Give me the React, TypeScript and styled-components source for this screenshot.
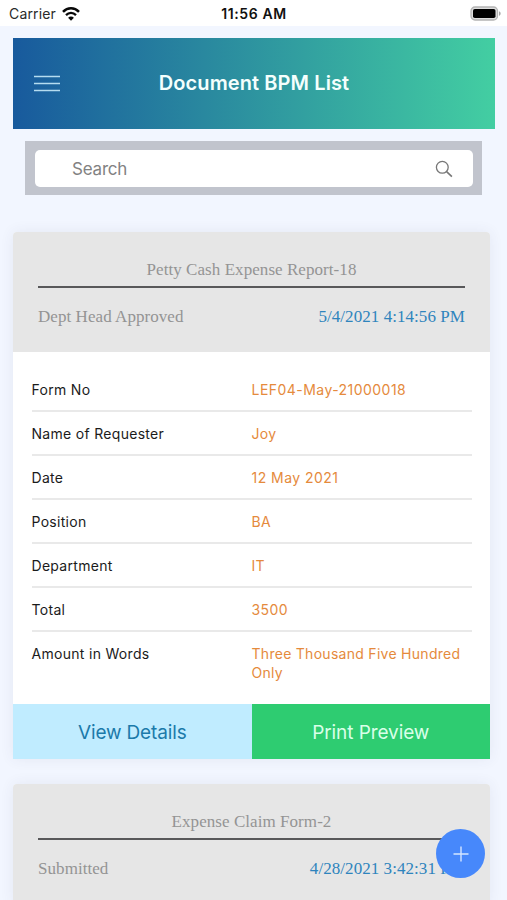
import React from "react";
import styled, { createGlobalStyle } from "styled-components";

const Global = createGlobalStyle`
  * { box-sizing: border-box; }
  html, body { margin: 0; height: 100%; overflow: hidden; background: #f2f6ff; }
  body { font-family: Inter, "Liberation Sans", sans-serif; }
`;

const Screen = styled.div`
  width: 507px;
  height: 900px;
  overflow: hidden;
  display: flex;
  flex-direction: column;
  background: #f2f6ff;
`;

const StatusBar = styled.div`
  flex: none;
  height: 25.5px;
  padding: 0 6px 0 9px;
  display: grid;
  grid-template-columns: 1fr auto 1fr;
  align-items: center;
  background: #fff;
  color: #111;
  font-size: 14px;
  line-height: 27px;
`;

const Carrier = styled.div`
  display: flex;
  align-items: center;
  gap: 6px;
  letter-spacing: 0.15px;
  color: #2a2a2a;
`;

const Clock = styled.div`
  margin-right: 2px;
  font-weight: 600;
  font-size: 14px;
  letter-spacing: 0.6px;
`;

const BatterySlot = styled.div`
  display: flex;
  justify-content: flex-end;
`;

const Header = styled.header`
  flex: none;
  width: 482px;
  height: 91px;
  margin: 12.5px 0 0 13px;
  padding: 0 21px;
  display: grid;
  grid-template-columns: 26px 1fr 26px;
  align-items: center;
  background: linear-gradient(90deg, #185a9d 0%, #43cea2 100%);
`;

const Title = styled.h1`
  margin: 0;
  padding-bottom: 2px;
  text-align: center;
  color: #f4fffd;
  font-size: 20px;
  font-weight: 600;
  line-height: 24px;
  letter-spacing: 0.1px;
`;

const SearchBar = styled.div`
  flex: none;
  width: 457px;
  height: 54px;
  margin: 12px 0 0 25px;
  padding: 8.5px 9.5px;
  background: #c1c4cd;
`;

const SearchField = styled.div`
  height: 37px;
  padding: 1px 20px 0 37.5px;
  display: flex;
  align-items: center;
  justify-content: space-between;
  border-radius: 5px;
  background: #fff;
  color: #828282;
  font-size: 17px;
  letter-spacing: -0.2px;
`;

const Cards = styled.main`
  flex: none;
  width: 477px;
  margin: 37px 0 0 13px;
  display: flex;
  flex-direction: column;
  gap: 25px;
`;

const Card = styled.section`
  border-radius: 4px 4px 0 0;
  background: #fff;
  box-shadow: 0 0 14px rgba(60, 70, 100, 0.08);
`;

const CardHead = styled.div`
  height: 120px;
  padding: 25px 25px 0;
  border-radius: 4px 4px 0 0;
  background: #e6e6e6;
  color: #949494;
  font-family: "Liberation Serif", serif;
  font-size: 17px;
  line-height: 25px;
  letter-spacing: 0.06px;
`;

const CardTitle = styled.div`
  height: 31px;
  text-align: center;
  border-bottom: 2px solid #58585a;
`;

const CardMeta = styled.div`
  margin-top: 16px;
  display: flex;
  justify-content: space-between;
`;

const Stamp = styled.span`
  color: #2e84bd;
`;

const Fields = styled.dl`
  margin: 0;
  height: 352px;
  padding: 16px 18px 0 18.5px;
  font-size: 14px;
  line-height: 18.5px;
`;

const Field = styled.div<{ $last?: boolean }>`
  height: 44px;
  padding-top: 13px;
  display: grid;
  grid-template-columns: 220px 1fr;
  border-bottom: ${(p) => (p.$last ? "none" : "2px solid #e9e9e9")};
`;

const Label = styled.dt`
  color: #1b1b1b;
  letter-spacing: 0.3px;
`;

const Value = styled.dd<{ $numeric?: boolean }>`
  margin: 0;
  color: #e58a3c;
  letter-spacing: ${(p) => (p.$numeric ? "0.46px" : "0.28px")};
`;

const Actions = styled.div`
  display: grid;
  grid-template-columns: 238.5px 238.5px;
  height: 54.5px;
`;

const Action = styled.button<{ $primary?: boolean }>`
  border: 0;
  padding: 3px 0 0;
  font: 400 19px/24px Inter, sans-serif;
  letter-spacing: ${(p) => (p.$primary ? "-0.08px" : "-0.15px")};
  background: ${(p) => (p.$primary ? "#2ecc71" : "#c0ecff")};
  color: ${(p) => (p.$primary ? "#d9ffe8" : "#1b7aaa")};
`;

const AddButton = styled.button`
  position: fixed;
  left: 436px;
  top: 829px;
  width: 49px;
  height: 49px;
  padding: 0;
  border: 0;
  border-radius: 50%;
  display: grid;
  place-items: center;
  background: #4788fb;
`;

const WifiIcon = () => (
  <svg width="18" height="14" viewBox="0 0 18 14" fill="none" stroke="#080808" strokeWidth="2.5">
    <path d="M1 4.8C5.5.2 12.5.2 17 4.8" />
    <path d="M4 8.1c2.9-2.9 7.1-2.9 10 0" strokeWidth="2.3" />
    <path d="M9 13.7 6.1 10.8c1.6-1.6 4.2-1.6 5.8 0z" fill="#080808" stroke="none" />
  </svg>
);

const BatteryIcon = () => (
  <svg width="31" height="15" viewBox="0 0 31 15">
    <rect x="1" y="1" width="26.5" height="13" rx="4" fill="#dedede" stroke="#b4b4b4" strokeWidth="1.3" />
    <rect x="3" y="3" width="22.5" height="9" rx="1.8" fill="#000" />
    <path d="M29 5.2c2.2.8 2.2 3.8 0 4.6z" fill="#a6a6a6" />
  </svg>
);

const MenuIcon = () => (
  <svg width="26" height="18" viewBox="0 0 26 18" stroke="#b5dcf0" strokeWidth="1.7">
    <path d="M0 1.5h26M0 8.5h26M0 15.5h26" />
  </svg>
);

const SearchIcon = () => (
  <svg width="18" height="18" viewBox="0 0 18 18" fill="none" stroke="#777" strokeWidth="1.3">
    <circle cx="7.3" cy="7.3" r="5.9" />
    <path d="m11.6 11.6 5.3 5" strokeWidth="1.6" />
  </svg>
);

const PlusIcon = () => (
  <svg width="16" height="16" viewBox="0 0 16 16" stroke="#d5e6ff" strokeWidth="1.4">
    <path d="M8 .5v15M.5 8h15" />
  </svg>
);

const fields = [
  ["Form No", "LEF04-May-21000018"],
  ["Name of Requester", "Joy"],
  ["Date", "12 May 2021"],
  ["Position", "BA"],
  ["Department", "IT"],
  ["Total", "3500"],
  ["Amount in Words", "Three Thousand Five Hundred Only"],
];

type HeadProps = { title: string; status: string; stamp: string };

const ReportHead = ({ title, status, stamp }: HeadProps) => (
  <CardHead>
    <CardTitle>{title}</CardTitle>
    <CardMeta>
      <span>{status}</span>
      <Stamp>{stamp}</Stamp>
    </CardMeta>
  </CardHead>
);

export default function App() {
  return (
    <Screen>
      <Global />
      <StatusBar>
        <Carrier>
          Carrier <WifiIcon />
        </Carrier>
        <Clock>11:56 AM</Clock>
        <BatterySlot>
          <BatteryIcon />
        </BatterySlot>
      </StatusBar>
      <Header>
        <MenuIcon />
        <Title>Document BPM List</Title>
      </Header>
      <SearchBar>
        <SearchField>
          <span>Search</span>
          <SearchIcon />
        </SearchField>
      </SearchBar>
      <Cards>
        <Card>
          <ReportHead title="Petty Cash Expense Report-18" status="Dept Head Approved" stamp="5/4/2021 4:14:56 PM" />
          <Fields>
            {fields.map(([label, value], i) => (
              <Field key={label} $last={i === fields.length - 1}>
                <Label>{label}</Label>
                <Value $numeric={/\d/.test(value)}>{value}</Value>
              </Field>
            ))}
          </Fields>
          <Actions>
            <Action>View Details</Action>
            <Action $primary>Print Preview</Action>
          </Actions>
        </Card>
        <Card>
          <ReportHead title="Expense Claim Form-2" status="Submitted" stamp="4/28/2021 3:42:31 PM" />
        </Card>
      </Cards>
      <AddButton aria-label="Add">
        <PlusIcon />
      </AddButton>
    </Screen>
  );
}
